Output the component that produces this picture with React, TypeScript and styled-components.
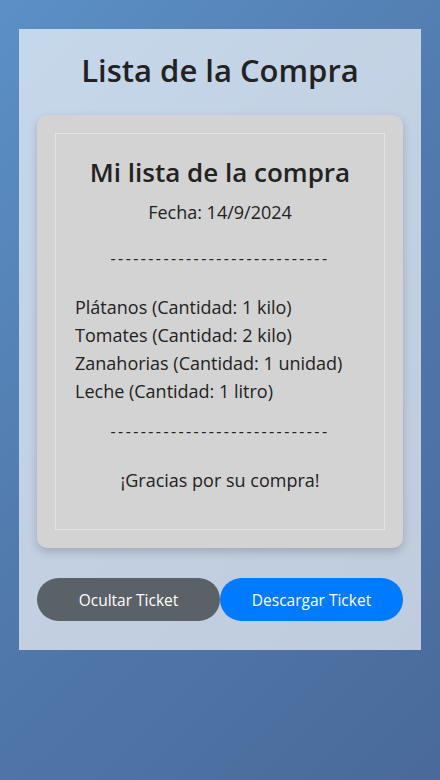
import React from 'react';
import styled, { createGlobalStyle } from 'styled-components';

const GlobalStyle = createGlobalStyle`
  html, body {
    margin: 0;
    padding: 0;
  }
  body {
    min-height: 780px;
    background: linear-gradient(135deg, #5b90c6 0%, #5179ab 50%, #496a9b 100%);
    font-family: "Open Sans", "Noto Sans", sans-serif;
    color: #222;
  }
`;

const Page = styled.div`
  padding: 29px 19px;
`;

const Container = styled.div`
  background: rgba(255, 255, 255, 0.65);
  padding: 20px 18px 29px;
  box-sizing: border-box;
  width: 402px;
`;

const Title = styled.h1`
  margin: 0 0 24px;
  text-align: center;
  font-size: 31px;
  font-weight: 600;
  line-height: 42px;
  color: #222;
`;

const Card = styled.div`
  background: #d3d3d3;
  border-radius: 10px;
  padding: 18px;
  box-shadow: 0 4px 10px rgba(0, 0, 0, 0.18);
`;

const Ticket = styled.div`
  border: 1px solid #e3e3e3;
  padding: 20px 19px 35px;
`;

const TicketTitle = styled.h2`
  margin: 0;
  text-align: center;
  font-size: 26px;
  font-weight: 600;
  line-height: 36px;
  color: #222;
`;

const DateLine = styled.p`
  margin: 8px 0 0;
  text-align: center;
  font-size: 18px;
  line-height: 28px;
`;

const Separator = styled.p<{ $top: number; $bottom: number }>`
  margin: ${(p) => p.$top}px 0 ${(p) => p.$bottom}px;
  text-align: center;
  font-size: 16px;
  line-height: 24px;
  letter-spacing: 2.4px;
`;

const ItemList = styled.ul`
  list-style: none;
  margin: 0;
  padding: 0;
`;

const Item = styled.li`
  font-size: 18px;
  line-height: 28px;
`;

const Thanks = styled.p`
  margin: 0;
  text-align: center;
  font-size: 18px;
  line-height: 28px;
`;

const Buttons = styled.div`
  display: flex;
  margin-top: 30px;
`;

const Button = styled.button<{ $variant: 'gray' | 'blue' }>`
  flex: 1;
  height: 43px;
  border: none;
  border-radius: 22px;
  background: ${(p) => (p.$variant === 'gray' ? '#5a6268' : '#007bff')};
  color: #fff;
  font-family: "Open Sans", "Noto Sans", sans-serif;
  font-size: 15.5px;
  cursor: pointer;
`;

const items = [
  'Plátanos (Cantidad: 1 kilo)',
  'Tomates (Cantidad: 2 kilo)',
  'Zanahorias (Cantidad: 1 unidad)',
  'Leche (Cantidad: 1 litro)',
];

const dashes = '-'.repeat(29);

const App: React.FC = () => {
  return (
    <>
      <GlobalStyle />
      <Page>
        <Container>
          <Title>Lista de la Compra</Title>
          <Card>
            <Ticket>
              <TicketTitle>Mi lista de la compra</TicketTitle>
              <DateLine>Fecha: 14/9/2024</DateLine>
              <Separator $top={20} $bottom={23}>{dashes}</Separator>
              <ItemList>
                {items.map((item) => (
                  <Item key={item}>{item}</Item>
                ))}
              </ItemList>
              <Separator $top={14} $bottom={23}>{dashes}</Separator>
              <Thanks>¡Gracias por su compra!</Thanks>
            </Ticket>
          </Card>
          <Buttons>
            <Button $variant="gray">Ocultar Ticket</Button>
            <Button $variant="blue">Descargar Ticket</Button>
          </Buttons>
        </Container>
      </Page>
    </>
  );
};

export default App;
